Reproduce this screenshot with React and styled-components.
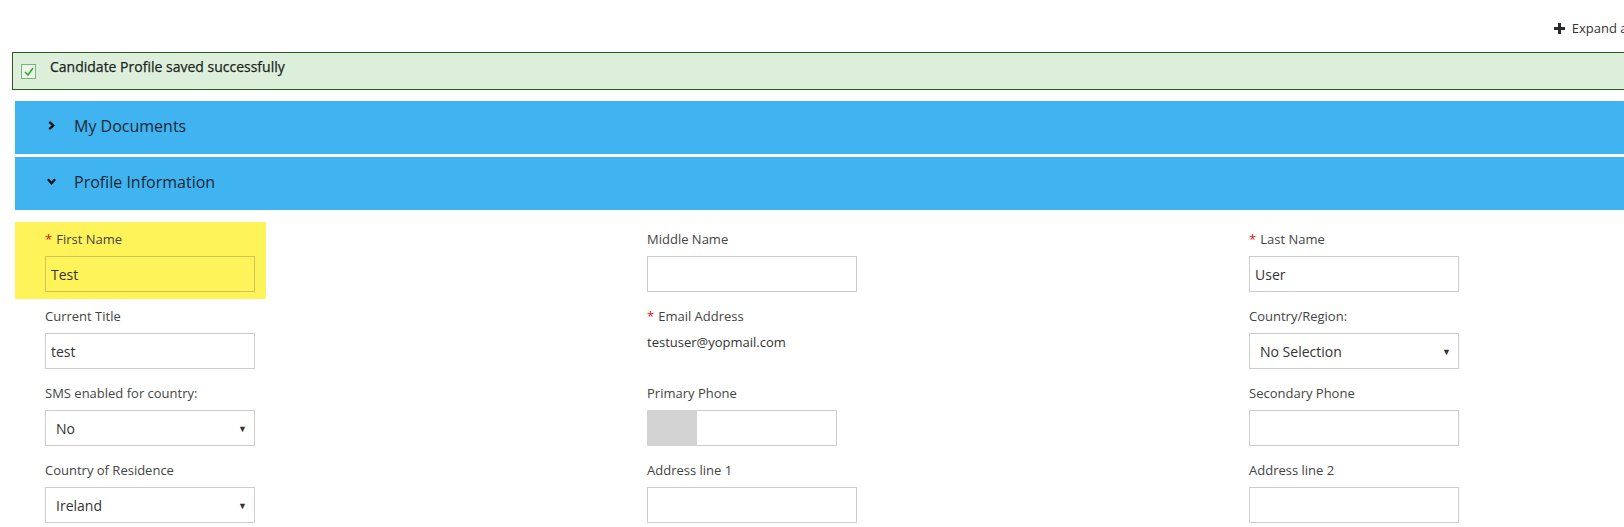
import React from 'react';
import styled, { createGlobalStyle } from 'styled-components';

const GlobalStyle = createGlobalStyle`
  body {
    margin: 0;
    overflow: hidden;
    background: #fff;
    font-family: "Open Sans", "Liberation Sans", sans-serif;
    color: #333;
  }
`;

const Page = styled.div`
  width: 1650px;
`;

const Toolbar = styled.div`
  display: flex;
  justify-content: flex-end;
  padding: 18px 16px 0;
  height: 20px;
`;

const ExpandLink = styled.span`
  display: flex;
  align-items: center;
  gap: 7px;
  font-size: 13px;
  line-height: 20px;
  color: #333;
`;

const Alert = styled.div`
  display: flex;
  align-items: flex-start;
  gap: 14px;
  margin: 14px 16px 0 12px;
  padding: 4px 8px 12px;
  height: 20px;
  background: #dbefdb;
  border: 1px solid #2b5a1f;
`;

const CheckBox = styled.span`
  display: flex;
  align-items: center;
  justify-content: center;
  width: 13px;
  height: 13px;
  margin-top: 7px;
  border: 1px solid #7bb57b;
  background: #eaf6ea;
`;

const AlertText = styled.span`
  font-size: 14px;
  font-weight: 500;
  line-height: 20px;
  color: #1f1f1f;
  -webkit-text-stroke: 0.25px #1f1f1f;
`;

const Panel = styled.div`
  display: flex;
  align-items: center;
  gap: 18px;
  height: 53px;
  box-sizing: border-box;
  margin: ${p => (p.first ? '11px' : '3px')} 0 0 15px;
  padding: 0 0 4px 32px;
  background: #40b4f0;
  font-size: 16px;
  color: #1d2733;
`;

const Form = styled.div`
  display: grid;
  grid-template-columns: repeat(3, 602px);
  margin: 12px 0 0 15px;
`;

const Field = styled.div`
  box-sizing: border-box;
  justify-self: start;
  height: 77px;
  padding: 8px 11px 0 30px;
  background: ${p => (p.highlight ? '#fff35a' : 'transparent')};
`;

const Label = styled.div`
  font-size: 13px;
  line-height: 18px;
  color: #444;
  margin-bottom: 8px;
  white-space: nowrap;
`;

const Required = styled.span`
  color: #e01010;
  margin-right: 4px;
`;

const Input = styled.div`
  box-sizing: border-box;
  width: ${p => p.width || 210}px;
  height: 36px;
  display: flex;
  align-items: center;
  padding: 0 ${p => (p.select ? 7 : 6)}px 0 ${p => (p.select ? 10 : 5)}px;
  border: 1px solid ${p => (p.highlight ? '#cfc45a' : '#cccccc')};
  font-size: 14px;
  color: #333;
  background: transparent;
`;

const SelectValue = styled.span`
  flex: 1;
`;

const Arrow = styled.span`
  font-size: 9px;
  color: #333;
`;

const Value = styled.div`
  font-size: 13px;
  line-height: 18px;
  color: #333;
`;

const PhoneBox = styled(Input)`
  padding: 0;
  align-items: stretch;
`;

const CountryCode = styled.span`
  width: 50px;
  margin: -1px 0 -1px -1px;
  background: #d3d3d3;
`;

const Plus = () => (
  <svg width="11" height="11" viewBox="0 0 11 11">
    <path d="M4 0h3v4h4v3H7v4H4V7H0V4h4z" fill="#2a2a2a" />
  </svg>
);

const Check = () => (
  <svg width="10" height="9" viewBox="0 0 10 9">
    <path d="M1 5l3 3 5-7" stroke="#3aa53a" strokeWidth="1.6" fill="none" />
  </svg>
);

const Chevron = ({ open }) => (
  <svg width="9" height="9" viewBox="0 0 10 10" style={{ transform: open ? 'rotate(90deg)' : 'none' }}>
    <path d="M2.5 1l4.5 4-4.5 4" stroke="#111" strokeWidth="2.6" fill="none" />
  </svg>
);

const Select = ({ value }) => (
  <Input select>
    <SelectValue>{value}</SelectValue>
    <Arrow>▼</Arrow>
  </Input>
);

const App = () => (
  <Page>
    <GlobalStyle />
    <Toolbar>
      <ExpandLink>
        <Plus />
        Expand all
      </ExpandLink>
    </Toolbar>
    <Alert>
      <CheckBox>
        <Check />
      </CheckBox>
      <AlertText>Candidate Profile saved successfully</AlertText>
    </Alert>
    <Panel first>
      <Chevron />
      My Documents
    </Panel>
    <Panel>
      <Chevron open />
      Profile Information
    </Panel>
    <Form>
      <Field highlight>
        <Label><Required>*</Required>First Name</Label>
        <Input highlight>Test</Input>
      </Field>
      <Field>
        <Label>Middle Name</Label>
        <Input />
      </Field>
      <Field>
        <Label><Required>*</Required>Last Name</Label>
        <Input>User</Input>
      </Field>

      <Field>
        <Label>Current Title</Label>
        <Input>test</Input>
      </Field>
      <Field>
        <Label><Required>*</Required>Email Address</Label>
        <Value>testuser@yopmail.com</Value>
      </Field>
      <Field>
        <Label>Country/Region:</Label>
        <Select value="No Selection" />
      </Field>

      <Field>
        <Label>SMS enabled for country:</Label>
        <Select value="No" />
      </Field>
      <Field>
        <Label>Primary Phone</Label>
        <PhoneBox width={190}>
          <CountryCode />
        </PhoneBox>
      </Field>
      <Field>
        <Label>Secondary Phone</Label>
        <Input />
      </Field>

      <Field>
        <Label>Country of Residence</Label>
        <Select value="Ireland" />
      </Field>
      <Field>
        <Label>Address line 1</Label>
        <Input />
      </Field>
      <Field>
        <Label>Address line 2</Label>
        <Input />
      </Field>
    </Form>
  </Page>
);

export default App;
